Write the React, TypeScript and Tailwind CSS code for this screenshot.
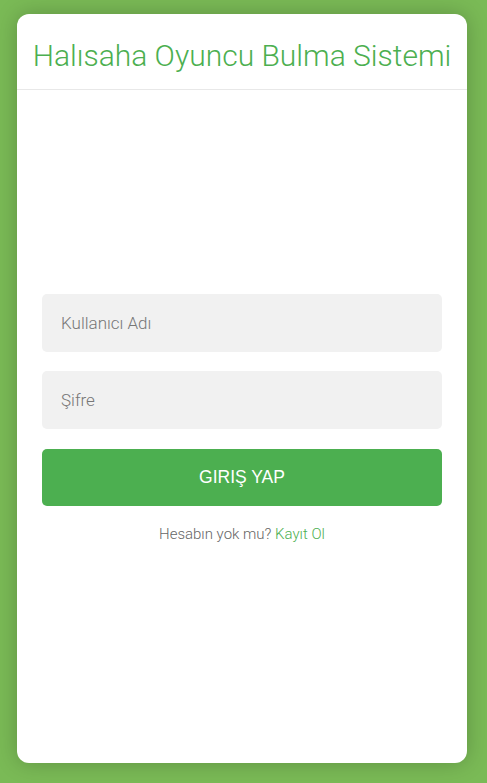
import React, { useState } from 'react';

export default function App() {
  const [user, setUser] = useState('');
  const [pass, setPass] = useState('');

  return (
    <div className="min-h-screen w-full bg-[#7aba56] pl-[17px] pr-[20px] pt-[14px] pb-[20px] font-['Roboto',sans-serif]">
      <div className="h-[749px] bg-white rounded-[12px] shadow-[0_0_22px_rgba(0,0,0,0.22)] flex flex-col overflow-hidden">
        {/* Header */}
        <div className="pt-[24px] pb-[15px] border-b border-[#e8e8e8] text-center">
          <h1 className="text-[30px] leading-[36px] text-[#4caf50] font-light">Halısaha Oyuncu Bulma Sistemi</h1>
        </div>

        {/* Login form */}
        <div className="flex-1 flex flex-col justify-center px-[25px] pb-[14px]">
          <input
            type="text"
            placeholder="Kullanıcı Adı"
            value={user}
            onChange={e => setUser(e.target.value)}
            className="w-full h-[58px] bg-[#f1f1f1] rounded-[5px] px-[19px] text-[17px] font-light text-[#555] placeholder:text-[#777] outline-none"
          />
          <input
            type="password"
            placeholder="Şifre"
            value={pass}
            onChange={e => setPass(e.target.value)}
            className="w-full h-[58px] mt-[19px] bg-[#f1f1f1] rounded-[5px] px-[19px] text-[17px] font-light text-[#555] placeholder:text-[#777] outline-none"
          />
          <button className="w-full h-[57px] mt-[20px] bg-[#4caf50] rounded-[5px] text-white text-[17.5px] font-['Liberation_Sans',Arial,sans-serif]">
            GIRIŞ YAP
          </button>
          <p className="mt-[18px] text-center text-[15px] leading-[21px] font-light text-[#666]">
            Hesabın yok mu? <a href="#" className="text-[#4caf50]">Kayıt Ol</a>
          </p>
        </div>
      </div>
    </div>
  );
}
